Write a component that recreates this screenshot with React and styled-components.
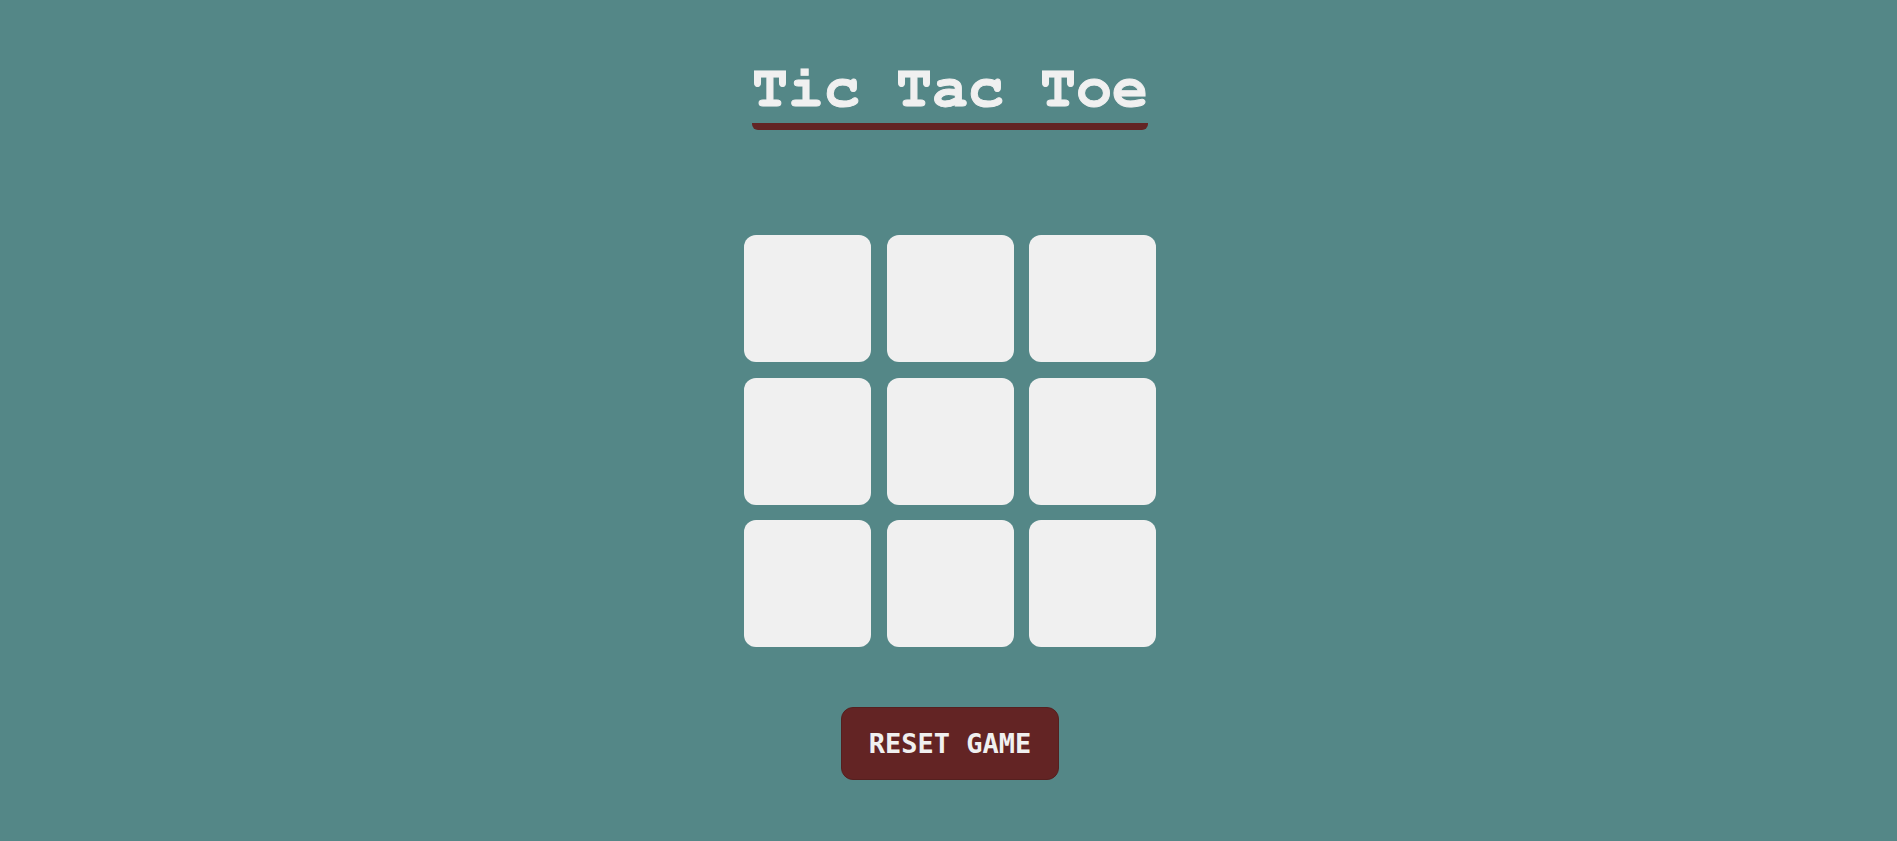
import React from "react";
import styled, { createGlobalStyle } from "styled-components";

const Global = createGlobalStyle`
  html, body { margin: 0; padding: 0; background: #548787; }
  body { min-height: 100vh; }
`;

const Page = styled.main`
  display: flex;
  flex-direction: column;
  align-items: center;
  padding: 55px 0 40px 3px;
`;

const Title = styled.h1`
  margin: 0;
  font-family: "Nimbus Mono PS", "Nimbus Mono L", "FreeMono", "Courier New", Courier, "Liberation Mono", monospace;
  font-weight: 700;
  font-size: 60px;
  line-height: 66px;
  padding-bottom: 2px;
  color: #f0f0f0;
  -webkit-text-stroke: 1px #f0f0f0;
  border-bottom: 7px solid #632424;
  border-radius: 0 0 6px 6px;
`;

const Board = styled.div`
  display: grid;
  grid-template-columns: repeat(3, 127px);
  grid-auto-rows: 127px;
  gap: 15.5px;
  margin-top: 105px;
`;

const Cell = styled.button`
  border: none;
  border-radius: 12px;
  background: #f0f0f0;
  padding: 0;
  cursor: pointer;
  font-family: "Liberation Mono", monospace;
  font-size: 72px;
  font-weight: 700;
  color: #632424;
`;

const Reset = styled.button`
  margin-top: 60px;
  padding: 20px 27px;
  border: 1px solid #55201f;
  border-radius: 12px;
  background: #632424;
  color: #f0f0f0;
  font-family: "DejaVu Sans Mono", monospace;
  font-weight: 700;
  font-size: 27px;
  line-height: normal;
  cursor: pointer;
`;

export default function App() {
  const [cells, setCells] = React.useState(Array(9).fill(""));
  const [turn, setTurn] = React.useState("X");
  const play = (i) => {
    if (cells[i]) return;
    const next = cells.slice();
    next[i] = turn;
    setCells(next);
    setTurn(turn === "X" ? "O" : "X");
  };
  return (
    <>
      <Global />
      <Page>
        <Title>Tic Tac Toe</Title>
        <Board>
          {cells.map((c, i) => (
            <Cell key={i} onClick={() => play(i)}>{c}</Cell>
          ))}
        </Board>
        <Reset onClick={() => { setCells(Array(9).fill("")); setTurn("X"); }}>RESET GAME</Reset>
      </Page>
    </>
  );
}
